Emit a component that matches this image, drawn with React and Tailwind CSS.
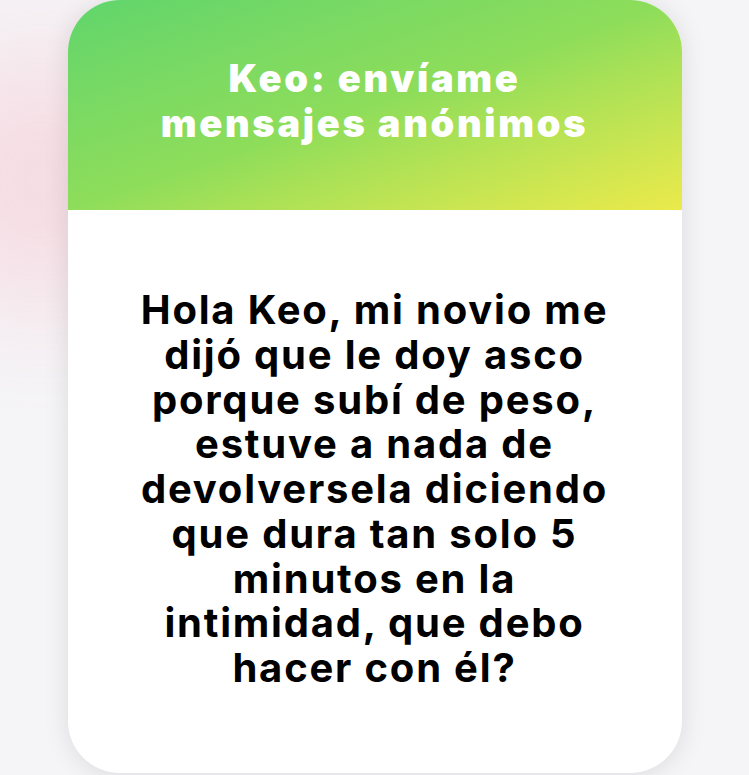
import React from 'react';

const lines = [
  'Hola Keo, mi novio me',
  'dijó que le doy asco',
  'porque subí de peso,',
  'estuve a nada de',
  'devolversela diciendo',
  'que dura tan solo 5',
  'minutos en la',
  'intimidad, que debo',
  'hacer con él?',
];

export default function App() {
  return (
    <div
      className="relative flex h-[775px] w-full justify-center overflow-hidden bg-[#f5f5f7]"
      style={{ fontFamily: 'Inter, "Noto Sans", sans-serif' }}
    >
      {/* soft pink glow behind the card */}
      <div className="absolute -left-[70px] top-[50px] h-[260px] w-[220px] rounded-full bg-[#f6d3dc] opacity-80 blur-3xl" />

      <div className="relative flex h-[773px] w-[614px] flex-col overflow-hidden rounded-[52px] bg-white shadow-[0_2px_26px_rgba(0,0,0,0.11)]">
        <div className="h-[210px] shrink-0 bg-linear-to-br from-[#5fd56c] via-[#8edd5a] to-[#ebea4a] pt-[56px] text-center">
          <h1 className="text-[38px] font-black leading-[45px] tracking-[2.7px] text-white">
            Keo: envíame
            <br />
            mensajes anónimos
          </h1>
        </div>

        <div className="flex-1 px-[40px] pt-[78px]">
          <p className="text-center text-[40px] font-bold leading-[44.75px] tracking-[1.8px] text-black">
            {lines.map((line, i) => (
              <span key={i} className="block whitespace-nowrap">
                {line}
              </span>
            ))}
          </p>
        </div>
      </div>
    </div>
  );
}
